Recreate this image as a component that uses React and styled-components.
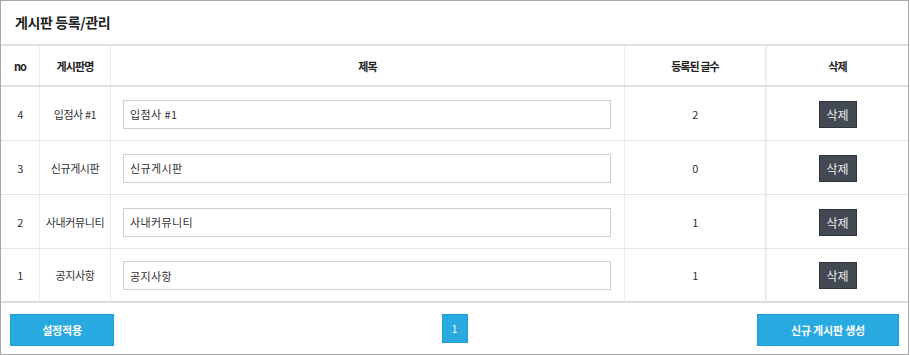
import React from 'react';
import styled, { createGlobalStyle } from 'styled-components';

const boards = [
  { no: 4, name: '입점사 #1', count: 2 },
  { no: 3, name: '신규게시판', count: 0 },
  { no: 2, name: '사내커뮤니티', count: 1 },
  { no: 1, name: '공지사항', count: 1 },
];

const GlobalStyle = createGlobalStyle`
  html, body {
    margin: 0;
    padding: 0;
    background: #fff;
  }
  body {
    font-family: "Noto Sans CJK KR", "Noto Sans", sans-serif;
    color: #333;
  }
  * {
    box-sizing: border-box;
  }
`;

const App = () => {
  return (
    <>
      <GlobalStyle />
      <Panel>
        <Title>게시판 등록/관리</Title>
        <HeadRow>
          <HeadCell>no</HeadCell>
          <HeadCell>게시판명</HeadCell>
          <HeadCell>제목</HeadCell>
          <HeadCell>등록된 글수</HeadCell>
          <HeadCell last>삭제</HeadCell>
        </HeadRow>
        {boards.map((b, i) => (
          <Row key={b.no} end={i === boards.length - 1}>
            <Cell>{b.no}</Cell>
            <Cell>{b.name}</Cell>
            <Cell align='left'>
              <TitleInput type='text' defaultValue={b.name} />
            </Cell>
            <Cell>{b.count}</Cell>
            <Cell last>
              <DeleteButton>삭제</DeleteButton>
            </Cell>
          </Row>
        ))}
        <Footer>
          <BlueButton wide={104}>설정적용</BlueButton>
          <PageButton>1</PageButton>
          <BlueButton wide={142}>신규 게시판 생성</BlueButton>
        </Footer>
      </Panel>
    </>
  );
};

const Panel = styled.div`
  width: 909px;
  height: 355px;
  border: 1px solid #a8a8a8;
  background: #fff;
  display: flex;
  flex-direction: column;
`;

const Title = styled.h1`
  margin: 0;
  height: 45px;
  padding: 0 0 2px 14px;
  display: flex;
  align-items: center;
  font-size: 14px;
  font-weight: 700;
  color: #222;
  letter-spacing: -0.4px;
  border-bottom: 2px solid #e0e0e0;
`;

const columns = '39px 71px 514px 141px 1fr';

const HeadRow = styled.div`
  display: grid;
  grid-template-columns: ${columns};
  height: 41px;
  border-bottom: 2px solid #e0e0e0;
`;

const HeadCell = styled.div`
  display: flex;
  align-items: center;
  justify-content: center;
  white-space: pre;
  font-size: 11px;
  font-weight: 700;
  color: #222;
  letter-spacing: -0.9px;
  border-left: ${(p) => (p.last ? '1px solid #ececec' : '0')};
  border-right: ${(p) => (p.last ? '0' : '1px solid #ececec')};
`;

const Row = styled.div`
  display: grid;
  grid-template-columns: ${columns};
  height: 54px;
  border-bottom: ${(p) => (p.end ? '2px solid #dcdcdc' : '1px solid #e6e6e6')};
`;

const Cell = styled.div`
  display: flex;
  align-items: center;
  justify-content: ${(p) => (p.align === 'left' ? 'flex-start' : 'center')};
  padding: ${(p) => (p.align === 'left' ? '0 13px 0 12px' : '0')};
  font-size: 11px;
  color: #333;
  letter-spacing: -0.4px;
  border-left: ${(p) => (p.last ? '1px solid #ececec' : '0')};
  border-right: ${(p) => (p.last ? '0' : '1px solid #ececec')};
`;

const TitleInput = styled.input`
  width: 100%;
  height: 29px;
  margin-top: 1px;
  border: 1px solid #cfcfcf;
  background: #fff;
  padding: 0 6px;
  font-family: "Noto Sans CJK KR", "Noto Sans", sans-serif;
  font-size: 11px;
  letter-spacing: 0.4px;
  color: #333;
  outline: none;
`;

const DeleteButton = styled.button`
  width: 38px;
  height: 27px;
  margin-top: 1px;
  padding: 0;
  background: #434953;
  border: 1px solid #30353c;
  color: #e8e8e8;
  font-family: "Noto Sans CJK KR", "Noto Sans", sans-serif;
  font-size: 12px;
  cursor: pointer;
`;

const Footer = styled.div`
  flex: 1;
  display: flex;
  align-items: flex-start;
  justify-content: space-between;
  padding: 11px 9px 0 9px;
`;

const BlueButton = styled.button`
  width: ${(p) => p.wide}px;
  height: 32px;
  padding: 0;
  background: #28aae1;
  border: 1px solid #1f9fd6;
  color: #fff;
  font-family: "Noto Sans CJK KR", "Noto Sans", sans-serif;
  font-size: 11px;
  font-weight: 700;
  letter-spacing: -0.2px;
  cursor: pointer;
`;

const PageButton = styled.button`
  width: 26px;
  height: 29px;
  padding: 0;
  margin-left: 38px;
  background: #28aae1;
  border: 1px solid #1f9fd6;
  color: #fff;
  font-family: "Noto Sans CJK KR", "Noto Sans", sans-serif;
  font-size: 10px;
  cursor: pointer;
`;

export default App;
